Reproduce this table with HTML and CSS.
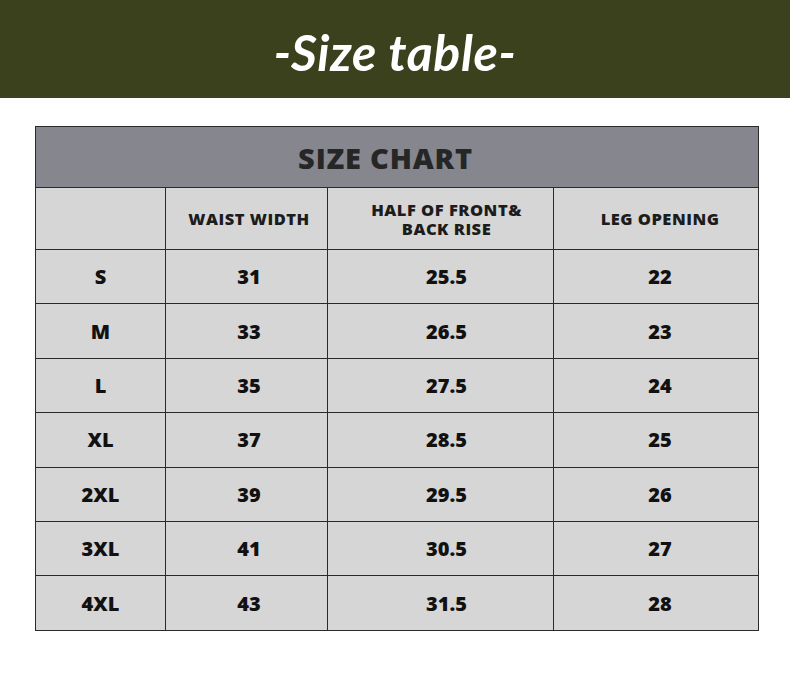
FILE: index.html
```html
<!DOCTYPE html>
<html>
<head>
<meta charset="utf-8">
<link rel="stylesheet" href="styles.css">
</head>
<body>
<header class="banner"><h1 class="banner-title">-Size table-</h1></header>
<main class="wrap">
<table class="chart">
  <colgroup>
    <col class="c1"><col class="c2"><col class="c3"><col class="c4">
  </colgroup>
  <thead>
    <tr class="title-row"><th colspan="4">SIZE CHART</th></tr>
    <tr class="head-row">
      <th></th>
      <th>WAIST WIDTH</th>
      <th>HALF OF FRONT&amp;<br>BACK RISE</th>
      <th>LEG OPENING</th>
    </tr>
  </thead>
  <tbody>
    <tr><td>S</td><td>31</td><td>25.5</td><td>22</td></tr>
    <tr><td>M</td><td>33</td><td>26.5</td><td>23</td></tr>
    <tr><td>L</td><td>35</td><td>27.5</td><td>24</td></tr>
    <tr><td>XL</td><td>37</td><td>28.5</td><td>25</td></tr>
    <tr><td>2XL</td><td>39</td><td>29.5</td><td>26</td></tr>
    <tr><td>3XL</td><td>41</td><td>30.5</td><td>27</td></tr>
    <tr><td>4XL</td><td>43</td><td>31.5</td><td>28</td></tr>
  </tbody>
</table>
</main>
</body>
</html>
```
FILE: styles.css
```css
html, body {
  margin: 0;
  padding: 0;
  background: #ffffff;
}
body {
  font-family: "Open Sans", "DejaVu Sans", sans-serif;
}
.banner {
  height: 98px;
  background: #3a411c;
  display: flex;
  align-items: center;
  justify-content: center;
}
.banner-title {
  margin: 0;
  color: #ffffff;
  font-family: "Lato", "Open Sans", sans-serif;
  font-style: italic;
  font-weight: 700;
  font-size: 50px;
  letter-spacing: 0.6px;
  line-height: 1;
  padding-top: 6px;
}
.wrap {
  padding: 28px 32px 0 35px;
}
.chart {
  width: 723px;
  border-collapse: collapse;
  table-layout: fixed;
  color: #1c1c1c;
}
.c1 { width: 130px; }
.c2 { width: 162px; }
.c3 { width: 226px; }
.c4 { width: 205px; }
.chart th, .chart td {
  border: 1.5px solid #2a2a2a;
  text-align: center;
  vertical-align: middle;
  padding: 0;
  font-weight: 800;
}
.chart th:nth-child(2), .chart td:nth-child(2) { padding-left: 5px; }
.chart th:nth-child(3), .chart td:nth-child(3) { padding-left: 12px; }
.chart th:nth-child(4), .chart td:nth-child(4) { padding-left: 8px; }
.title-row th {
  background: #86868e;
  height: 60px;
  font-size: 29px;
  letter-spacing: 0.8px;
  color: #262626;
  padding: 0 23px 0 0;
}
.head-row th {
  background: #d6d6d6;
  height: 61px;
  font-size: 16.5px;
  line-height: 19px;
  letter-spacing: 0.5px;
}
.chart td {
  background: #d6d6d6;
  height: 53.4px;
  font-size: 20px;
  color: #111;
}
```
